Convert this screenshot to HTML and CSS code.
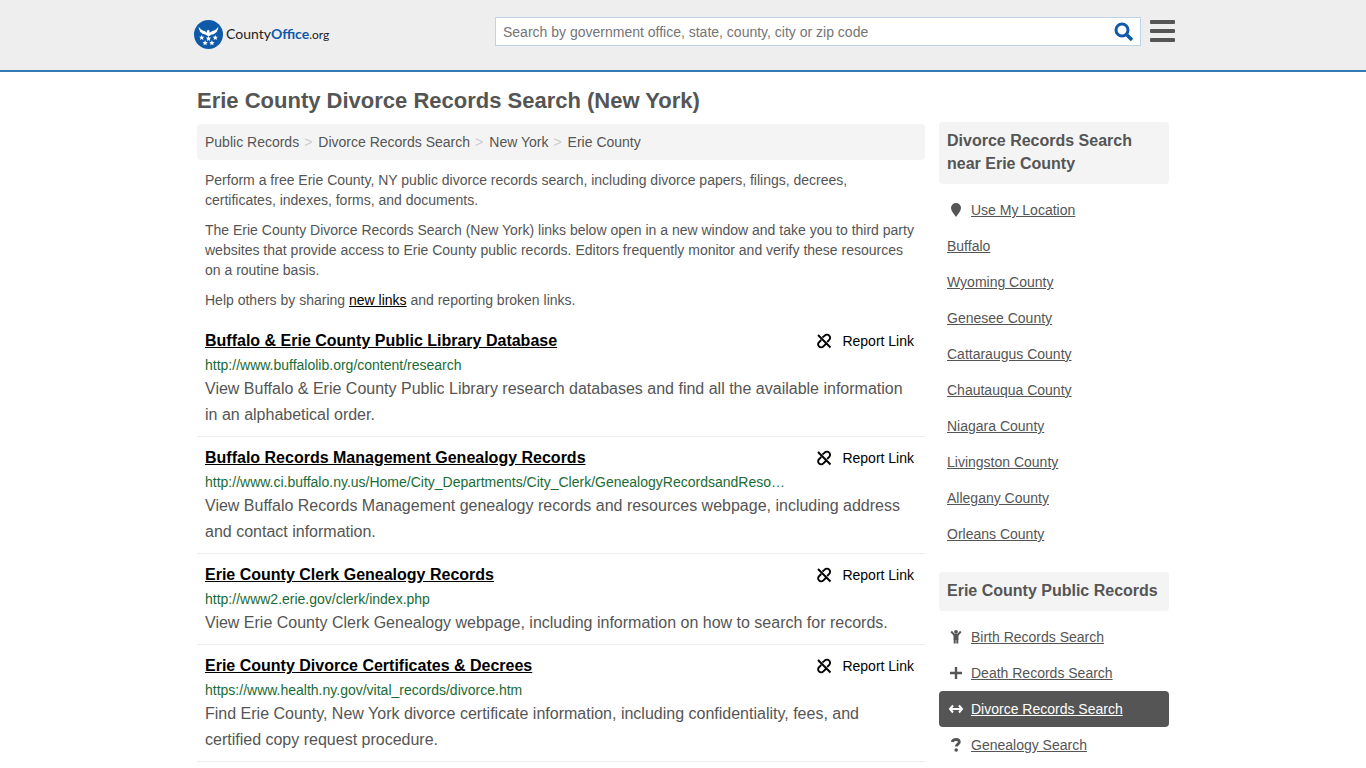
FILE: index.html
```html
<!DOCTYPE html>
<html lang="en">
<head>
  <meta charset="UTF-8" />
  <title>Erie County Divorce Records Search (New York)</title>
  <meta name="viewport" content="width=device-width, initial-scale=1.0" />
  <link rel="stylesheet" href="styles.css">
</head>
<body>
  <!-- icons used more than once -->
  <svg class="sprite" aria-hidden="true">
    <symbol id="unlink" viewBox="0 0 16 16">
      <path d="M2 2l12.500 12.500M6.500 4.500L8.700 2.600a3 3 0 0 1 4.500 0 3 3 0 0 1 0 4.300L11.200 9M5.200 7L3 9.200a2.900 2.900 0 0 0 0 4.200 3 3 0 0 0 4.400 0L9.800 11" fill="none" stroke="currentColor" stroke-width="1.900" />
    </symbol>
  </svg>

  <header>
    <div class="header-inner">
      <a href="#" class="logo">
        <svg width="29" height="29" viewBox="0 0 30 30" aria-hidden="true">
          <circle cx="15" cy="15" r="15" fill="#0f59a9" />
          <path fill="#fff" d="M5 7c1 2.500 3.500 3.700 6 4.500l2.500 1.700-.3-2.200 1.800-.8 1 .8v2.200l3-1.700c2.500-.8 5-2 6-4.500.3 2-.3 3.500-1.500 4.500h.7c-.8 1.300-1.800 2-3 2.300h.7c-1 1-2.200 1.300-3.700 1.200L15 17l-3.200-2c-1.500.1-2.700-.2-3.700-1.200h.7c-1.200-.3-2.200-1-3-2.300h.7C5.300 10.500 4.700 9 5 7z" />
          <g fill="#fff">
            <path id="star" d="M8 15.500l.8 1.700 1.900.2-1.400 1.300.4 1.900L8 19.600l-1.700 1 .4-1.900-1.400-1.300 1.900-.2z" />
            <use href="#star" x="7" y="1" />
            <use href="#star" x="14" />
            <use href="#star" x="3.500" y="5.500" />
            <use href="#star" x="10.500" y="5.500" />
          </g>
        </svg>
        <span>County<b>Office</b><small>.org</small></span>
      </a>
      <form class="search">
        <input type="text" aria-label="Search" placeholder="Search by government office, state, county, city or zip code" />
        <button type="submit" aria-label="Search">
          <svg width="20" height="20" viewBox="0 0 20 20"><path d="M13 13l5 5" stroke="#0f59a9" stroke-width="3.500" /><circle cx="8" cy="8" r="6" fill="none" stroke="#0f59a9" stroke-width="3" /></svg>
        </button>
      </form>
      <button class="menu" aria-label="Menu"><span></span><span></span><span></span></button>
    </div>
  </header>

  <div class="container">
    <h1>Erie County Divorce Records Search (New York)</h1>
    <div class="columns">
      <main>
        <nav class="breadcrumb">
          <a href="#">Public Records</a><i>&gt;</i><a href="#">Divorce Records Search</a><i>&gt;</i><a href="#">New York</a><i>&gt;</i><a href="#">Erie County</a>
        </nav>
        <div class="intro">
          <p>Perform a free Erie County, NY public divorce records search, including divorce papers, filings, decrees, certificates, indexes, forms, and documents.</p>
          <p>The Erie County Divorce Records Search (New York) links below open in a new window and take you to third party websites that provide access to Erie County public records. Editors frequently monitor and verify these resources on a routine basis.</p>
          <p>Help others by sharing <a href="#">new links</a> and reporting broken links.</p>
        </div>

        <article class="result">
          <div class="result-head">
            <h2><a href="#">Buffalo &amp; Erie County Public Library Database</a></h2>
            <a href="#" class="report"><svg><use href="#unlink" /></svg>Report Link</a>
          </div>
          <div class="url">http://www.buffalolib.org/content/research</div>
          <p>View Buffalo &amp; Erie County Public Library research databases and find all the available information in an alphabetical order.</p>
        </article>

        <article class="result">
          <div class="result-head">
            <h2><a href="#">Buffalo Records Management Genealogy Records</a></h2>
            <a href="#" class="report"><svg><use href="#unlink" /></svg>Report Link</a>
          </div>
          <div class="url">http://www.ci.buffalo.ny.us/Home/City_Departments/City_Clerk/GenealogyRecordsandReso…</div>
          <p>View Buffalo Records Management genealogy records and resources webpage, including address and contact information.</p>
        </article>

        <article class="result">
          <div class="result-head">
            <h2><a href="#">Erie County Clerk Genealogy Records</a></h2>
            <a href="#" class="report"><svg><use href="#unlink" /></svg>Report Link</a>
          </div>
          <div class="url">http://www2.erie.gov/clerk/index.php</div>
          <p>View Erie County Clerk Genealogy webpage, including information on how to search for records.</p>
        </article>

        <article class="result">
          <div class="result-head">
            <h2><a href="#">Erie County Divorce Certificates &amp; Decrees</a></h2>
            <a href="#" class="report"><svg><use href="#unlink" /></svg>Report Link</a>
          </div>
          <div class="url">https://www.health.ny.gov/vital_records/divorce.htm</div>
          <p>Find Erie County, New York divorce certificate information, including confidentiality, fees, and certified copy request procedure.</p>
        </article>
      </main>

      <aside>
        <h3>Divorce Records Search near Erie County</h3>
        <ul>
          <li><svg viewBox="0 0 16 16"><path d="M8 1a5 5 0 0 1 5 5c0 3-3 6-5 9-2-3-5-6-5-9a5 5 0 0 1 5-5z" fill="currentColor" /></svg><a href="#">Use My Location</a></li>
          <li><a href="#">Buffalo</a></li>
          <li><a href="#">Wyoming County</a></li>
          <li><a href="#">Genesee County</a></li>
          <li><a href="#">Cattaraugus County</a></li>
          <li><a href="#">Chautauqua County</a></li>
          <li><a href="#">Niagara County</a></li>
          <li><a href="#">Livingston County</a></li>
          <li><a href="#">Allegany County</a></li>
          <li><a href="#">Orleans County</a></li>
        </ul>

        <h3>Erie County Public Records</h3>
        <ul>
          <li><svg viewBox="0 0 16 16"><circle cx="8" cy="2.800" r="1.900" fill="currentColor" /><path d="M3.200 2.500L6.200 5.800h3.600l3-3.300M6.700 6v8.500M9.300 6v8.500" fill="none" stroke="currentColor" stroke-width="2" /><path d="M5.700 5h4.600v6H5.700z" fill="currentColor" /></svg><a href="#">Birth Records Search</a></li>
          <li><svg viewBox="0 0 16 16"><path d="M8 2v12M2 8h12" stroke="currentColor" stroke-width="2.400" /></svg><a href="#">Death Records Search</a></li>
          <li class="active"><svg viewBox="0 0 16 16"><path d="M2 8h12M5 4.500L2 8l3 3.500M11 4.500L14 8l-3 3.500" fill="none" stroke="currentColor" stroke-width="2" /></svg><a href="#">Divorce Records Search</a></li>
          <li><svg viewBox="0 0 16 16"><path d="M4.300 5c.4-2 1.700-2.500 3.700-2.500s3.300.8 3.300 2.500c0 2.200-3 2.200-3 4.600" fill="none" stroke="currentColor" stroke-width="2.800" /><circle cx="8.200" cy="13" r="1.800" fill="currentColor" /></svg><a href="#">Genealogy Search</a></li>
        </ul>
      </aside>
    </div>
  </div>
</body>
</html>
```
FILE: styles.css
```css
* {
  box-sizing: border-box;
}
body {
  font-family: "Liberation Sans", Arial, sans-serif;
  font-size: 14px;
  line-height: 20px;
  color: #555;
  background-color: #fff;
  margin: 0;
}
a {
  color: inherit;
}
.sprite {
  display: none;
}
header {
  background-color: #eee;
  border-bottom: 2px solid #337ab7;
}
.header-inner {
  max-width: 984px;
  height: 70px;
  margin: 0 auto;
  padding: 17px 0;
  display: flex;
  align-items: flex-start;
}
.logo {
  flex: 1;
  display: flex;
  align-items: center;
  gap: 3px;
  padding: 3px 0 0 3px;
  font-family: Lato, sans-serif;
  font-size: 14px;
  color: #222;
  text-decoration: none;
}
.logo b {
  color: #0f59a9;
}
.logo small {
  font-size: 12px;
}
.search {
  flex: 0 1 646px;
  height: 29px;
  display: flex;
  background-color: #fff;
  border: 1px solid #bcd3e8;
}
.search input {
  flex: 1;
  min-width: 0;
  border: 0;
  padding: 0 7px;
  font-family: inherit;
  font-size: 14px;
  background: none;
}
.search input::placeholder {
  color: #757575;
}
.search button, .menu {
  border: 0;
  background: none;
  cursor: pointer;
}
.search button {
  width: 32px;
  padding: 4px 0 0;
}
.menu {
  width: 25px;
  margin-left: 9px;
  padding: 3px 0;
  display: flex;
  flex-direction: column;
  gap: 5px;
}
.menu span {
  height: 4px;
  background-color: #555;
  border-radius: 1px;
}
.container {
  max-width: 972px;
  margin: 0 auto;
}
h1 {
  font-size: 22px;
  line-height: 28px;
  margin: 15px 0 7px;
}
.columns {
  display: flex;
  align-items: flex-start;
  gap: 14px;
}
main {
  flex: 1;
  min-width: 0;
  padding-top: 2px;
}
.breadcrumb {
  background-color: #f4f4f4;
  border-radius: 4px;
  padding: 8px;
}
.breadcrumb a {
  text-decoration: none;
}
.breadcrumb i {
  font-style: normal;
  color: #ccc;
  margin: 0 6px 0 5px;
}
.intro {
  padding: 0 8px;
}
.intro p {
  margin: 10px 0;
}
.intro a {
  color: #000;
}
.result {
  padding: 8px;
  border-bottom: 1px solid #eee;
}
.result-head {
  display: flex;
  justify-content: space-between;
  line-height: 26px;
}
.result h2 {
  font-size: 16px;
  margin: 0;
  color: #000;
}
.report {
  display: flex;
  align-items: center;
  gap: 10px;
  margin-right: 3px;
  color: #000;
  text-decoration: none;
}
.report svg {
  width: 16px;
  height: 16px;
}
.url {
  color: #1a6b35;
  line-height: 22px;
}
.result p {
  margin: 0;
  font-size: 16px;
  line-height: 26px;
}
aside {
  flex: 0 0 230px;
}
aside h3 {
  background-color: #f4f4f4;
  border-radius: 4px;
  font-size: 16px;
  line-height: 23px;
  margin: 0 0 8px;
  padding: 7px 8px 9px;
}
aside ul {
  list-style: none;
  margin: 0 0 20px;
  padding: 0;
}
aside ul:last-child {
  margin-bottom: 0;
}
aside li {
  display: flex;
  align-items: center;
  gap: 6px;
  padding: 8px;
}
aside li svg {
  width: 18px;
  height: 16px;
}
aside li.active {
  background-color: #555;
  color: #fff;
  border-radius: 4px;
}
```
